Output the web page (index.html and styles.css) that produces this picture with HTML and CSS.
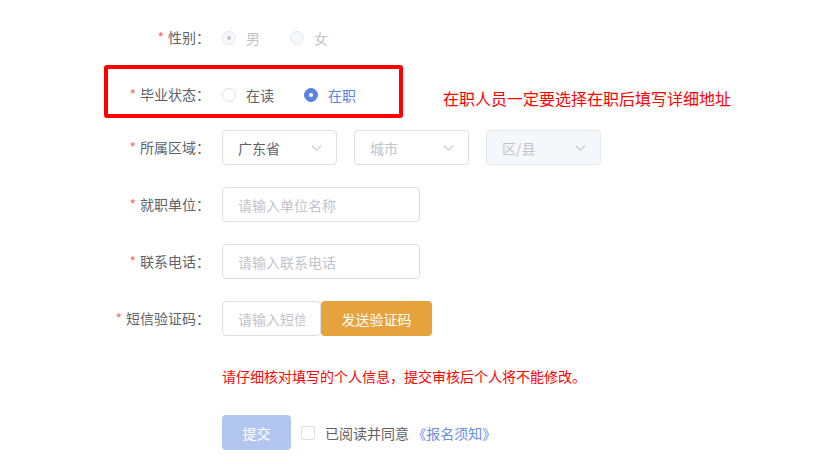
FILE: index.html
```html
<!DOCTYPE html>
<html lang="zh-CN">
<head>
    <meta charset="UTF-8">
    <meta name="viewport" content="width=device-width, initial-scale=1.0">
    <title>报名信息</title>
    <link rel="stylesheet" href="styles.css">
</head>
<body>
    <form class="apply-form">
        <div class="form-item">
            <label class="form-label required">性别：</label>
            <div class="form-content">
                <span class="radio is-disabled is-checked"><span class="radio-inner"></span><span class="radio-text">男</span></span>
                <span class="radio is-disabled"><span class="radio-inner"></span><span class="radio-text">女</span></span>
            </div>
        </div>

        <div class="form-item form-item-marked">
            <label class="form-label required">毕业状态：</label>
            <div class="form-content">
                <span class="radio"><span class="radio-inner"></span><span class="radio-text">在读</span></span>
                <span class="radio is-checked"><span class="radio-inner"></span><span class="radio-text">在职</span></span>
            </div>
            <!-- annotation drawn over the screenshot -->
            <div class="mark-box"></div>
            <div class="mark-text">在职人员一定要选择在职后填写详细地址</div>
        </div>

        <div class="form-item">
            <label class="form-label required">所属区域：</label>
            <div class="form-content select-group">
                <div class="select"><span class="select-value">广东省</span><svg class="select-arrow" viewBox="0 0 12 8"><path d="M1 1.5l5 5 5-5" /></svg></div>
                <div class="select"><span class="select-value placeholder">城市</span><svg class="select-arrow" viewBox="0 0 12 8"><path d="M1 1.5l5 5 5-5" /></svg></div>
                <div class="select is-disabled"><span class="select-value placeholder">区/县</span><svg class="select-arrow" viewBox="0 0 12 8"><path d="M1 1.5l5 5 5-5" /></svg></div>
            </div>
        </div>

        <div class="form-item">
            <label class="form-label required">就职单位：</label>
            <div class="form-content">
                <input class="input" type="text" placeholder="请输入单位名称">
            </div>
        </div>

        <div class="form-item">
            <label class="form-label required">联系电话：</label>
            <div class="form-content">
                <input class="input" type="text" placeholder="请输入联系电话">
            </div>
        </div>

        <div class="form-item">
            <label class="form-label required">短信验证码：</label>
            <div class="form-content">
                <input class="input input-code" type="text" placeholder="请输入短信验证码">
                <button class="btn btn-warning" type="button">发送验证码</button>
            </div>
        </div>

        <div class="form-item">
            <label class="form-label"></label>
            <div class="form-content">
                <p class="notice">请仔细核对填写的个人信息，提交审核后个人将不能修改。</p>
            </div>
        </div>

        <div class="form-item">
            <label class="form-label"></label>
            <div class="form-content">
                <button class="btn btn-primary is-disabled" type="button">提交</button>
                <span class="checkbox"><span class="checkbox-inner"></span></span>
                <span class="agree">已阅读并同意 <a class="agree-link" href="#">《报名须知》</a></span>
            </div>
        </div>
    </form>
</body>
</html>
```

FILE: styles.css
```css
body {
    margin: 0;
    font-family: "Noto Sans CJK SC", "Noto Sans", sans-serif;
    font-size: 14px;
    color: #606266;
    background: #fff;
}
.apply-form {
    padding: 20px 0 0 100px;
}
.form-item {
    display: flex;
    align-items: center;
    height: 35px;
    margin-bottom: 22px;
    position: relative;
}
.form-item-marked {
    margin-bottom: 18px;
}
.form-label {
    width: 122px;
    box-sizing: border-box;
    padding-right: 12px;
    text-align: right;
    line-height: 35px;
    color: #606266;
    flex-shrink: 0;
    white-space: nowrap;
}
.form-label.required::before {
    content: "*";
    color: #f56c6c;
    margin-right: 4px;
}
.form-content {
    display: flex;
    align-items: center;
}

/* radios */
.radio {
    display: inline-flex;
    align-items: center;
    margin-right: 30px;
    cursor: pointer;
}
.radio-inner {
    width: 14px;
    height: 14px;
    box-sizing: border-box;
    border: 1px solid #dcdfe6;
    border-radius: 50%;
    background: #fff;
    position: relative;
}
.radio-text {
    padding-left: 10px;
    color: #606266;
}
.radio.is-checked .radio-inner {
    background: #5a82e0;
    border-color: #5a82e0;
}
.radio.is-checked .radio-inner::after {
    content: "";
    position: absolute;
    left: 4px;
    top: 4px;
    width: 4px;
    height: 4px;
    border-radius: 50%;
    background: #fff;
}
.radio.is-checked .radio-text {
    color: #5a82e0;
}
.radio.is-disabled .radio-inner {
    background: #f5f7fa;
    border-color: #e4e7ed;
}
.radio.is-disabled.is-checked .radio-inner::after {
    background: #c0c4cc;
}
.radio.is-disabled .radio-text {
    color: #c0c4cc;
}

/* annotation */
.mark-box {
    position: absolute;
    left: 4px;
    top: -12px;
    width: 299px;
    height: 53px;
    box-sizing: border-box;
    border: 4px solid #ff0000;
    border-radius: 3px;
}
.mark-text {
    position: absolute;
    left: 343px;
    top: 10px;
    font-size: 16px;
    line-height: 22px;
    color: #ff0000;
    white-space: nowrap;
}

/* selects */
.select-group {
    gap: 17px;
}
.select {
    width: 115px;
    height: 35px;
    box-sizing: border-box;
    border: 1px solid #dcdfe6;
    border-radius: 4px;
    padding: 0 14px 0 15px;
    display: flex;
    align-items: center;
    justify-content: space-between;
    background: #fff;
}
.select.is-disabled {
    background: #f5f7fa;
    border-color: #e4e7ed;
}
.select-value {
    color: #606266;
}
.select-value.placeholder {
    color: #c0c4cc;
}
.select-arrow {
    width: 11px;
    height: 8px;
    fill: none;
    stroke: #c0c4cc;
    stroke-width: 1.2;
}

/* inputs */
.input {
    width: 198px;
    height: 35px;
    box-sizing: border-box;
    border: 1px solid #dcdfe6;
    border-radius: 4px;
    padding: 0 15px;
    font: inherit;
    color: #606266;
    outline: none;
}
.input::placeholder {
    color: #c0c4cc;
}
.input-code {
    width: 99px;
}

/* buttons */
.btn {
    height: 35px;
    box-sizing: border-box;
    border: none;
    border-radius: 4px;
    font: inherit;
    color: #fff;
    cursor: pointer;
}
.btn-warning {
    width: 111px;
    background: #e6a23c;
}
.btn-primary {
    width: 69px;
    background: #b3c6ef;
}

.notice {
    margin: 0;
    color: #ff0000;
    font-size: 14px;
}

/* agreement */
.checkbox {
    margin-left: 10px;
    display: inline-flex;
}
.checkbox-inner {
    width: 14px;
    height: 14px;
    box-sizing: border-box;
    border: 1px solid #dcdfe6;
    border-radius: 2px;
    background: #fff;
}
.agree {
    padding-left: 10px;
    color: #606266;
}
.agree-link {
    color: #6a8de3;
    text-decoration: none;
}
```
